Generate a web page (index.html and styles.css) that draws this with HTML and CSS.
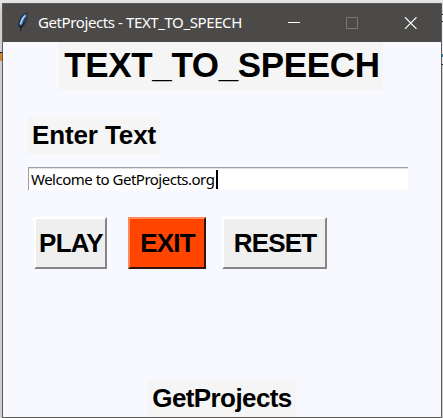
FILE: index.html
```html
<!DOCTYPE html>
<html lang="en">
<head>
<meta charset="utf-8">
<title>GetProjects - TEXT_TO_SPEECH</title>
<link rel="stylesheet" href="styles.css">
</head>
<body>
<main class="window">
  <header class="titlebar">
    <svg class="feather" width="12" height="20" viewBox="0 0 12 20">
      <path d="M10.500 .5C6 1 1.500 6 1.300 14l2 2.200C8 14 11 8 10.500 .5z" fill="#182334"/>
      <path d="M9.500 1.500C6 3 3 7 2.400 12.500l1.400 1.300C8 11 9.800 7 9.500 1.500z" fill="#4e86c6"/>
      <path d="M8 3.500C5.500 6 4 9 3.500 12" fill="none" stroke="#b8d5f2" stroke-width="1.3"/>
      <path d="M8.500 5.500L3.200 19" fill="none" stroke="#111820" stroke-width="1"/>
    </svg>
    <span class="caption">GetProjects - TEXT_TO_SPEECH</span>
    <svg class="controls" width="158" height="12" viewBox="0 0 158 12" fill="none" shape-rendering="crispEdges">
      <path d="M0 5.500h12" stroke="#fff"/>
      <rect x="58.500" y=".5" width="11" height="11" stroke="#777674"/>
      <path d="M117 .3l11.500 11.500M128.500 .3L117 11.800" stroke="#fff" stroke-width="1.2" shape-rendering="auto"/>
    </svg>
  </header>
  <h1 class="label heading"><span>TEXT_TO_SPEECH</span></h1>
  <div class="label prompt"><span>Enter Text</span></div>
  <div class="entry"><span class="value">Welcome to GetProjects.org</span><i class="caret"></i></div>
  <div class="buttons">
    <button class="button play">PLAY</button>
    <button class="button exit">EXIT</button>
    <button class="button reset">RESET</button>
  </div>
  <footer class="label footer"><span>GetProjects</span></footer>
</main>
<div class="behind-left"></div>
<div class="behind-right"></div>
</body>
</html>
```
FILE: styles.css
```css
* { box-sizing: border-box; }
body {
  margin: 0;
  width: 443px;
  height: 418px;
  overflow: hidden;
  padding: 3px 0 0 2px;
  background: linear-gradient(#e6e6e6, #cfcfcf 12px, #cfcfcf);
  font-family: "Liberation Sans", Arial, sans-serif;
}
.window {
  display: flex;
  flex-direction: column;
  align-items: flex-start;
  width: 440px;
  height: 415px;
  border: 1px solid #5c5b5a;
  background: #f8f8ff;
  color: #000;
}
.titlebar {
  display: flex;
  align-items: center;
  width: 438px;
  height: 38px;
  flex: none;
  padding-left: 14px;
  background: #4b4a48;
  color: #fff;
}
.feather { flex: none; margin: 0 9px 3px 0; }
.caption {
  width: 250px;
  flex: none;
  padding-bottom: 2px;
  font: 15px/20px "Noto Sans", sans-serif;
  letter-spacing: -.4px;
  white-space: nowrap;
}
.controls { flex: none; }
.label {
  flex: none;
  display: flex;
  justify-content: center;
  align-items: center;
  margin: 0;
  background: #f5f5f5;
  font-weight: bold;
  white-space: nowrap;
}
.heading {
  width: 324px;
  height: 48px;
  margin-left: 56px;
  padding: 0 0 2px 2px;
  font-size: 35px;
  letter-spacing: -.35px;
}
.prompt {
  width: 132px;
  height: 37px;
  margin: 27px 0 0 25px;
  font-size: 26px;
  letter-spacing: -.1px;
}
.entry {
  display: flex;
  align-items: center;
  flex: none;
  width: 380px;
  height: 23px;
  margin: 13px 0 0 25px;
  padding-left: 2px;
  border-top: 1px solid #a0a0a0;
  border-left: 1px solid #a0a0a0;
  box-shadow: inset 0 1px #e3e3e3;
  background: #fff;
}
.value {
  width: 185px;
  font: 15px/20px "Noto Sans", sans-serif;
  letter-spacing: -.5px;
  white-space: nowrap;
}
.caret { width: 2px; height: 19px; background: #000; }
.buttons { display: flex; flex: none; margin: 27px 0 0 31px; }
.button {
  height: 52px;
  padding: 0 0 1px 1px;
  border: 2px solid;
  border-color: #fff #858585 #858585 #fff;
  background: #efefef;
  color: #000;
  font: bold 26px/30px "Liberation Sans", Arial, sans-serif;
  letter-spacing: -.8px;
  white-space: nowrap;
}
.play { width: 73px; margin-right: 21px; }
.exit { width: 78px; margin-right: 16px; background: #ff4500; border-color: #ff8a5c #33120a #33120a #ff8a5c; }
.reset { width: 105px; }
.footer {
  width: 148px;
  height: 38px;
  margin: 110px 0 0 145px;
  font-size: 26px;
  letter-spacing: -.6px;
}
.behind-left, .behind-right { position: absolute; }
.behind-left {
  left: 0;
  top: 52px;
  width: 2px;
  height: 9px;
  border-top: 1px solid #111;
  background: #d9822b;
}
.behind-right {
  left: 442px;
  top: 14px;
  width: 1px;
  height: 51px;
  background: linear-gradient(#111 1px, #eee 1px 7px, #111 7px 8px, #eee 8px 40px, #2878a8 40px 43px, #eee 43px 50px, #111 50px);
}
```
